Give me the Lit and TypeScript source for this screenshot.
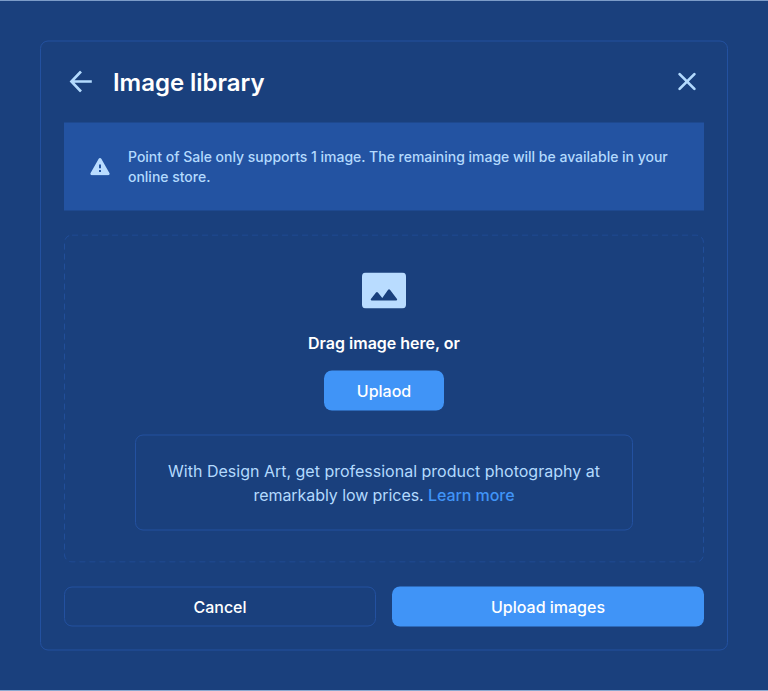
import { LitElement, html, css } from "lit";
import { customElement } from "lit/decorators.js";

@customElement("app-root")
export class AppRoot extends LitElement {
  static styles = css`
    :host {
      display: block;
      box-sizing: border-box;
      height: 691px;
      border-top: 1px solid #7c9cc8;
      border-bottom: 1px solid #8ba8d0;
      background: #1a407d;
      color: #fff;
      font-family: Inter, "Liberation Sans", sans-serif;
      overflow: hidden;
    }
    * { box-sizing: border-box; }
    .card {
      margin: 39px 40px 0;
      height: 610px;
      padding: 23px;
      border: 1px solid #2351a0;
      border-radius: 8px;
      transform: translateY(0.5px);
    }
    .header {
      display: flex;
      align-items: center;
      height: 34px;
      margin-bottom: 24px;
      padding: 0 5px;
    }
    .title {
      flex: 1;
      margin: 0 0 0 21px;
      padding-top: 1px;
      font-size: 24px;
      line-height: 34px;
      font-weight: 600;
      letter-spacing: -0.03px;
    }
    svg { display: block; flex: none; }
    .banner {
      display: flex;
      align-items: center;
      height: 88px;
      padding: 0 26px;
      gap: 18px;
      background: #2353a2;
      color: #b3dafe;
      font-size: 14px;
      line-height: 20px;
      font-weight: 500;
      letter-spacing: -0.012px;
    }
    .banner p, .promo p { margin: 0; }
    .drop {
      position: relative;
      display: flex;
      flex-direction: column;
      align-items: center;
      height: 328px;
      margin: 24px 0;
      padding-top: 38px;
    }
    .outline { position: absolute; inset: 0; }
    .hint {
      margin: 22px 0 16px;
      font-size: 16px;
      line-height: 24px;
      font-weight: 600;
    }
    button {
      height: 40px;
      padding: 0;
      border: 0;
      border-radius: 8px;
      background: #4094f7;
      color: #fff;
      font: 500 16px/24px Inter, "Liberation Sans", sans-serif;
    }
    .upload { width: 120px; }
    .promo {
      width: 498px;
      height: 96px;
      margin-top: 24px;
      padding: 23px 0;
      border: 1px solid #2351a0;
      border-radius: 8px;
      color: #b3dafe;
      font-size: 16px;
      line-height: 24px;
      text-align: center;
    }
    .second { letter-spacing: -0.07px; }
    .link { color: #4094f7; font-weight: 500; }
    .actions { display: grid; grid-template-columns: 1fr 1fr; gap: 16px; }
    .actions .cancel { background: none; border: 1px solid #2351a0; }
  `;

  render() {
    return html`
      <div class="card">
        <div class="header">
          <svg width="23" height="22" viewBox="0 0 23 22" fill="none" stroke="#b3dafe" stroke-width="2.6">
            <path d="M12 1 2.4 11l9.6 10M2.4 11h20.4" />
          </svg>
          <h1 class="title">Image library</h1>
          <svg width="24" height="24" viewBox="0 0 24 24" fill="none" stroke="#b3dafe" stroke-width="2.7" stroke-linecap="round">
            <path d="m4.6 4.6 14.8 14.8M19.4 4.6 4.6 19.4" />
          </svg>
        </div>
        <div class="banner">
          <svg width="20" height="18" viewBox="0 0 20 18">
            <path fill="#b9dcff" fill-rule="evenodd" d="M8.7 1.3a1.5 1.5 0 0 1 2.6 0l8.1 14.1a1.5 1.5 0 0 1-1.3 2.3H1.9a1.5 1.5 0 0 1-1.3-2.3zM9 7v3.8h2V7zm0 5.6v2h2v-2z" />
          </svg>
          <p>Point of Sale only supports 1 image. The remaining image will be available in your<br />online store.</p>
        </div>
        <div class="drop">
          <svg class="outline" width="640" height="328" fill="none">
            <rect x=".5" y=".5" width="639" height="327" rx="7.5" stroke="#2351a0" stroke-opacity=".8" stroke-dasharray="6 4" />
          </svg>
          <svg width="44" height="36" viewBox="0 0 44 36">
            <rect width="44" height="36" rx="4" fill="#b9dcff" />
            <path fill="#1a407d" d="M9.6 28a.9.9 0 0 1-.7-1.4l5.1-6.5a1.2 1.2 0 0 1 1.9 0l4.4 5.3 5.8-8.1a1.2 1.2 0 0 1 1.9 0l7 9.3a.9.9 0 0 1-.7 1.4z" />
          </svg>
          <div class="hint">Drag image here, or</div>
          <button class="upload">Uplaod</button>
          <div class="promo">
            <p>With Design Art, get professional product photography at<br /><span class="second">remarkably low prices. <span class="link">Learn more</span></span></p>
          </div>
        </div>
        <div class="actions">
          <button class="cancel">Cancel</button>
          <button>Upload images</button>
        </div>
      </div>
    `;
  }
}
